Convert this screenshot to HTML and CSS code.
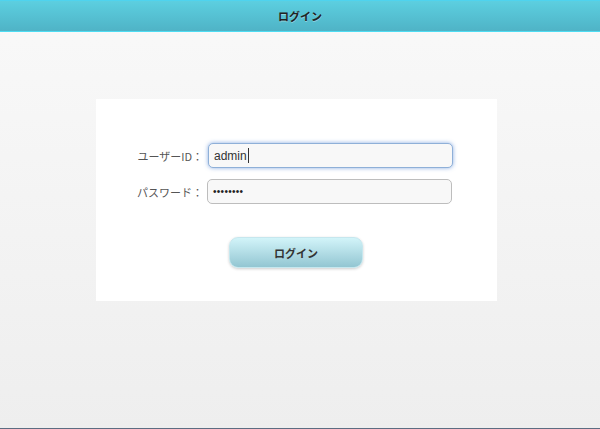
FILE: index.html
```html
<!DOCTYPE html>
<html lang="ja">
<head>
<meta charset="utf-8">
<title>ログイン</title>
<link rel="stylesheet" href="styles.css">
</head>
<body>
<div class="page">
  <header class="topbar"><h1 class="title">ログイン</h1></header>
  <main class="main">
    <div class="panel">
      <div class="row">
        <label class="label">ユーザーID：</label>
        <div class="field field-focus"><span class="val">admin</span><span class="caret"></span></div>
      </div>
      <div class="row row-pw">
        <label class="label">パスワード：</label>
        <div class="field field-pw"><span class="dots">••••••••</span></div>
      </div>
      <div class="actions">
        <button class="btn">ログイン</button>
      </div>
    </div>
  </main>
  <div class="bottomline"></div>
</div>
</body>
</html>
```
FILE: styles.css
```css
html, body { margin: 0; padding: 0; }
body {
  font-family: "Noto Sans CJK JP", "Liberation Sans", sans-serif;
  background: #f0f0f0;
}
.page {
  height: 429px;
  display: flex;
  flex-direction: column;
  background: linear-gradient(#f9f9f9, #eeeeee);
}
.topbar {
  height: 30px;
  border-top: 1px solid #4fd3ee;
  border-bottom: 1px solid #4ddcf2;
  background: linear-gradient(#5ccfe0, #4fb3c6);
  display: flex;
  align-items: center;
  justify-content: center;
}
.title {
  margin: 0;
  font-size: 11px;
  font-weight: bold;
  color: #222;
  text-shadow: 0 1px 0 rgba(255,255,255,0.35);
}
.main {
  flex: 1;
  padding-top: 67px;
}
.panel {
  margin-left: 96px;
  width: 401px;
  height: 202px;
  box-sizing: border-box;
  background: #fff;
  padding-top: 44px;
}
.row {
  display: flex;
  align-items: center;
  height: 25px;
}
.row-pw { margin-top: 11px; }
.label {
  width: 112px;
  text-align: right;
  font-size: 11px;
  color: #555;
  padding-right: 5px;
  box-sizing: border-box;
}
.field {
  width: 245px;
  height: 25px;
  box-sizing: border-box;
  border: 1px solid #bdbdbd;
  border-radius: 5px;
  background: #f8f8f8;
  display: flex;
  align-items: center;
  padding-left: 5px;
  font-family: "Liberation Sans", sans-serif;
  font-size: 12px;
  color: #333;
}
.field-focus {
  border-color: #8fb0d8;
  box-shadow: 0 0 4px rgba(90,140,215,0.7);
}
.field-pw { margin-left: -1px; }
.caret {
  width: 1px;
  height: 15px;
  background: #333;
  margin-left: 1px;
}
.dots {
  font-size: 10px;
  letter-spacing: 0.3px;
  color: #222;
}
.actions {
  display: flex;
  padding-left: 133px;
  margin-top: 33px;
}
.btn {
  width: 134px;
  height: 31px;
  border: 1px solid #c6e7ee;
  border-radius: 9px;
  background: linear-gradient(#d2f4f9, #93c6d2);
  box-shadow: 0 1px 3px rgba(0,0,0,0.2);
  font-family: "Noto Sans CJK JP", sans-serif;
  font-size: 11px;
  font-weight: bold;
  color: #333;
  padding: 0;
}
.bottomline {
  height: 1px;
  background: #5d6d82;
}
```
